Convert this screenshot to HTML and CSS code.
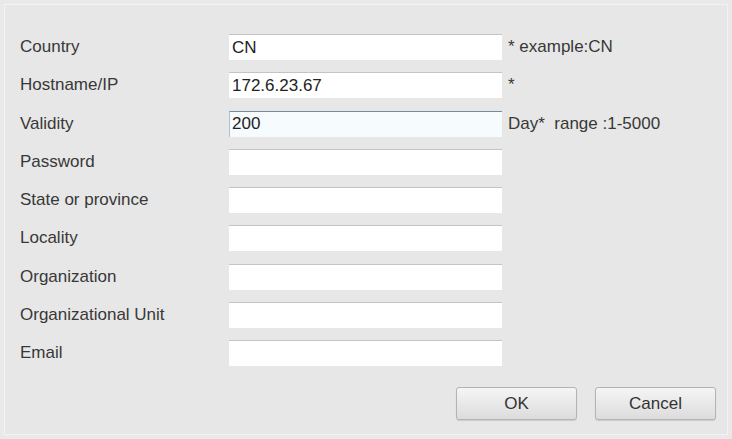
FILE: index.html
```html
<!DOCTYPE html>
<html lang="en">
<head>
<meta charset="UTF-8" />
<title>Create Certificate</title>
<link rel="stylesheet" href="styles.css">
</head>
<body>
<div class="panel">
  <div class="certForm">
    <label class="lbl">Country</label>
    <input class="field" type="text" value="CN">
    <span class="hint">* example:CN</span>

    <label class="lbl">Hostname/IP</label>
    <input class="field" type="text" value="172.6.23.67">
    <span class="hint">*</span>

    <label class="lbl">Validity</label>
    <input class="field focus" type="text" value="200">
    <span class="hint">Day*&nbsp; range :1-5000</span>

    <label class="lbl">Password</label>
    <input class="field" type="password">
    <span></span>

    <label class="lbl">State or province</label>
    <input class="field" type="text">
    <span></span>

    <label class="lbl">Locality</label>
    <input class="field" type="text">
    <span></span>

    <label class="lbl">Organization</label>
    <input class="field" type="text">
    <span></span>

    <label class="lbl">Organizational Unit</label>
    <input class="field" type="text">
    <span></span>

    <label class="lbl">Email</label>
    <input class="field" type="text">
    <span></span>
  </div>

  <div class="btnRow">
    <button class="btn">OK</button>
    <button class="btn">Cancel</button>
  </div>
</div>
</body>
</html>
```

FILE: styles.css
```css
/* ---------- reset ---------- */
*
{
  box-sizing:border-box;
  margin:0;
  padding:0;
}
body
{
  background:#e9e9e9;
  height:100vh;
  padding:4px;
  font-family:"Liberation Sans",Arial,sans-serif;
  font-size:17px;
  color:#383838;
  overflow:hidden;
}

/* ===== panel ===== */
.panel
{
  height:100%;
  border:1px solid #f3f3f3;
  background:#e7e7e7;
  padding:29px 11px 0 15px;
}

/* ===== form ===== */
.certForm
{
  display:grid;
  grid-template-columns:203px 273px auto;
  column-gap:6px;
  row-gap:12.3px;
  align-items:center;
}
.lbl{line-height:26px;white-space:nowrap;}
.field
{
  height:26px;
  width:100%;
  border:none;
  border-top:1px solid #c4c4c4;
  background:#fff;
  padding:0 3px;
  font:inherit;
  color:#222;
  outline:none;
}
.field.focus
{
  background:#f6fbfe;
  border-top:1px solid #6f8ea6;
  border-left:1px solid #a9c2d4;
  padding-left:2px;
}
.hint{white-space:nowrap;}

/* ===== buttons ===== */
.btnRow
{
  display:flex;
  justify-content:flex-end;
  gap:18px;
  margin-top:21px;
}
.btn
{
  width:121px;
  height:33px;
  border:1px solid #b3b3b3;
  border-radius:3px;
  background:linear-gradient(#f5f5f5,#dcdcdc);
  box-shadow:0 1px 1px rgba(0,0,0,.12);
  font:inherit;
  color:#333;
}
```
